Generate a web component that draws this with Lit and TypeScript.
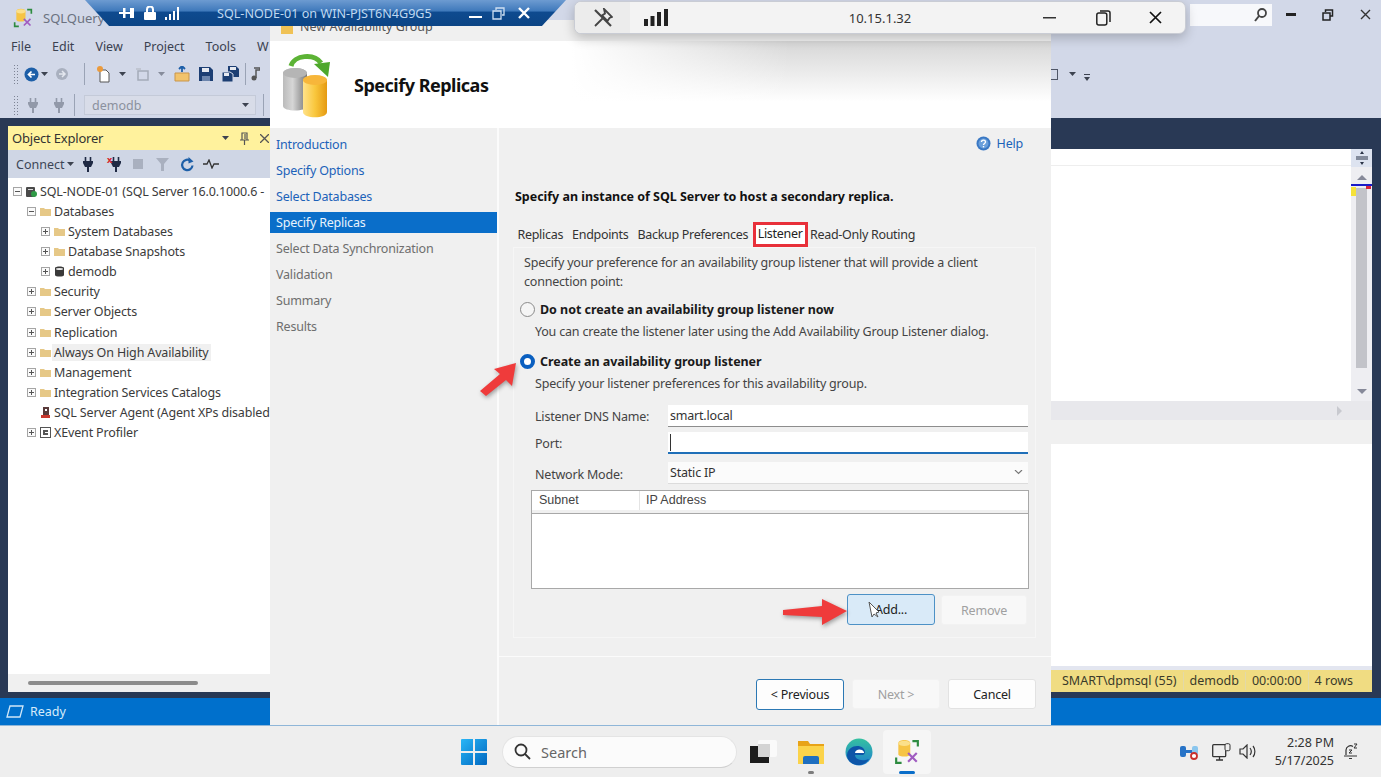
import { LitElement, html, css } from "lit";
import { customElement } from "lit/decorators.js";

type TreeRow = { label: string; level: number; icon: string; exp?: string; hover?: boolean };

const TREE: TreeRow[] = [
  { label: "SQL-NODE-01 (SQL Server 16.0.1000.6 -", level: 0, icon: "server", exp: "-" },
  { label: "Databases", level: 1, icon: "folder", exp: "-" },
  { label: "System Databases", level: 2, icon: "folder", exp: "+" },
  { label: "Database Snapshots", level: 2, icon: "folder", exp: "+" },
  { label: "demodb", level: 2, icon: "db", exp: "+" },
  { label: "Security", level: 1, icon: "folder", exp: "+" },
  { label: "Server Objects", level: 1, icon: "folder", exp: "+" },
  { label: "Replication", level: 1, icon: "folder", exp: "+" },
  { label: "Always On High Availability", level: 1, icon: "folder", exp: "+", hover: true },
  { label: "Management", level: 1, icon: "folder", exp: "+" },
  { label: "Integration Services Catalogs", level: 1, icon: "folder", exp: "+" },
  { label: "SQL Server Agent (Agent XPs disabled", level: 1, icon: "agent" },
  { label: "XEvent Profiler", level: 1, icon: "xevent", exp: "+" },
];

const NAV = [
  { label: "Introduction", kind: "link" },
  { label: "Specify Options", kind: "link" },
  { label: "Select Databases", kind: "link" },
  { label: "Specify Replicas", kind: "sel" },
  { label: "Select Data Synchronization", kind: "off" },
  { label: "Validation", kind: "off" },
  { label: "Summary", kind: "off" },
  { label: "Results", kind: "off" },
];

const TABS = ["Replicas", "Endpoints", "Backup Preferences", "Listener", "Read-Only Routing"];
const MENU = ["File", "Edit", "View", "Project", "Tools", "W"];

const plug = html`<svg width="10" height="15" viewBox="0 0 10 15"><path d="M2.500 0v4M7.500 0v4" stroke="currentColor" stroke-width="1.600"/><path d="M0 4h10v2L8 10H6v5H4v-5H2L0 6z" fill="currentColor"/></svg>`;
const dropArrow = html`<svg width="7" height="4" viewBox="0 0 7 4"><path d="M0 0h7L3.500 4z" fill="#3d4350"/></svg>`;
const ssmsIcon = (size: number) => html`<svg width=${size} height=${size} viewBox="0 0 24 24">
  <path d="M4 4c0-4 11-4 11 0v10c0 3-11 3-11 0z" fill="#f6c445"/>
  <ellipse cx="9.500" cy="4" rx="5.500" ry="2.500" fill="#fbe08b"/>
  <path d="M17 2h5v5M2 17v5h5" fill="none" stroke="#2e8b40" stroke-width="2"/>
  <path d="M13 13l8 8M21 13l-8 8" stroke="#a05cc0" stroke-width="2"/>
</svg>`;

@customElement("app-root")
export class AppRoot extends LitElement {
  static styles = css`
    :host {
      display: block;
      position: relative;
      width: 1381px;
      height: 777px;
      overflow: hidden;
      background: #eeeeee;
      font-family: "Noto Sans", "Open Sans", sans-serif;
      font-size: 12.500px;
      color: #2b2b2b;
    }
    svg {
      display: block;
      flex: none;
    }

    /* ssms window */
    .ssms {
      height: 725px;
      display: flex;
      flex-direction: column;
      background: #d2d8e8;
    }
    .title {
      height: 36px;
      display: flex;
      align-items: center;
      padding: 0 10px 0 13px;
      flex: none;
    }
    .title .app {
      margin-left: 10px;
      color: #6b7280;
      font-size: 13px;
    }
    .quick {
      margin-left: auto;
      width: 82px;
      height: 22px;
      margin-top: -7px;
      background: #f7f8fb;
      display: flex;
      align-items: center;
      justify-content: flex-end;
      padding-right: 2px;
      box-sizing: border-box;
    }
    .quick svg {
      margin-right: 2px;
    }
    .winbtns {
      display: flex;
      align-items: center;
      gap: 26px;
      margin: -7px 0 0 14px;
      color: #2b3448;
    }
    .menu {
      height: 20px;
      flex: none;
      display: flex;
      align-items: center;
      padding-left: 11px;
      color: #3a4150;
      gap: 21px;
    }
    .tool {
      flex: none;
      display: flex;
      align-items: center;
      padding-left: 13px;
      color: #1f2a44;
    }
    .tool.one {
      height: 36px;
    }
    .tool.two {
      height: 26px;
    }
    .grip {
      width: 6px;
      height: 20px;
      margin-right: 4px;
      background-image: radial-gradient(#7d8494 0.700px, transparent 0.900px);
      background-size: 3px 3px;
    }
    .sep {
      width: 1px;
      height: 22px;
      background: #9aa3b5;
    }
    .slot {
      width: 24px;
      display: flex;
      justify-content: center;
      align-items: center;
    }
    .slot.small {
      width: 12px;
    }
    .faded {
      color: #9299a9;
    }
    .combo {
      width: 172px;
      height: 20px;
      margin-left: 9px;
      box-sizing: border-box;
      border: 1px solid #c4cad8;
      background: #d8dce8;
      color: #8b919e;
      display: flex;
      align-items: center;
      justify-content: space-between;
      padding: 0 6px 0 7px;
    }
    .tool-right {
      margin-left: auto;
      display: flex;
      align-items: center;
      gap: 8px;
      padding-right: 291px;
      height: 24px;
    }

    .band {
      flex: 1;
      min-height: 0;
      display: flex;
      background: #293955;
      padding: 8px 9px 6px 8px;
      box-sizing: border-box;
    }
    .oe {
      width: 262px;
      display: flex;
      flex-direction: column;
      background: #fff;
      overflow: hidden;
    }
    .oe-title {
      height: 24px;
      flex: none;
      background: #fff29d;
      display: flex;
      align-items: center;
      padding: 0 4px;
      color: #333;
      font-size: 13px;
      letter-spacing: -0.200px;
    }
    .oe-title .btns {
      margin-left: auto;
      margin-right: -3px;
      display: flex;
      align-items: center;
      gap: 11px;
      color: #555;
    }
    .oe-tool {
      height: 28px;
      flex: none;
      background: #cfd6e5;
      display: flex;
      align-items: center;
      padding-left: 8px;
      color: #1f2a44;
    }
    .oe-tool .connect {
      width: 64px;
      color: #3c4556;
      display: flex;
      align-items: center;
      gap: 3px;
    }
    .tree {
      flex: 1;
      padding-top: 3px;
      overflow: hidden;
    }
    .row {
      height: 20.150px;
      display: flex;
      align-items: center;
      white-space: nowrap;
      color: #3b3b3b;
      letter-spacing: -0.150px;
    }
    .exp {
      width: 9px;
      height: 9px;
      flex: none;
      margin-right: 4px;
      box-sizing: border-box;
      border: 1px solid #a5a5a5;
      position: relative;
      background: #fafafa;
    }
    .exp::before {
      content: "";
      position: absolute;
      left: 1px;
      right: 1px;
      top: 3px;
      height: 1px;
      background: #555;
    }
    .exp.plus::after {
      content: "";
      position: absolute;
      top: 1px;
      bottom: 1px;
      left: 3px;
      width: 1px;
      background: #555;
    }
    .noexp {
      width: 13px;
      flex: none;
    }
    .row .label {
      margin-left: 1px;
      padding: 0 2px;
    }
    .row.hover .label {
      background: #f0f0f0;
    }
    .oe-foot {
      height: 18px;
      flex: none;
      background: #f0f0f0;
      display: flex;
      align-items: center;
      padding-left: 20px;
    }
    .oe-foot div {
      width: 170px;
      height: 4px;
      border-radius: 2px;
      background: #8c8c8c;
    }

    .doc {
      margin-left: auto;
      width: 321px;
      display: flex;
      flex-direction: column;
      padding-top: 23px;
      box-sizing: border-box;
    }
    .doc-top {
      flex: none;
      height: 252px;
      display: flex;
      background: #fff;
    }
    .doc-white {
      flex: 1;
      border-top: 16px solid #fff;
      box-shadow: inset 0 17px 0 -16px #eeeeee;
    }
    .scroller {
      width: 21px;
      background: #eeeef2;
      display: flex;
      flex-direction: column;
      align-items: center;
      position: relative;
    }
    .splitter {
      height: 18px;
      width: 100%;
      background: #dde3f0;
      display: flex;
      justify-content: center;
      align-items: center;
    }
    .thumb {
      width: 11px;
      height: 180px;
      margin-top: 21px;
      background: #c2c3c9;
    }
    .mark {
      position: absolute;
      top: 35px;
      left: 0;
      width: 100%;
      height: 2px;
      background: #1a1ac8;
    }
    .mark-yellow {
      position: absolute;
      top: 38px;
      left: 0;
      width: 5px;
      height: 9px;
      background: #f5e23a;
    }
    .mark-red {
      position: absolute;
      top: 37px;
      right: 1px;
      width: 5px;
      height: 3px;
      background: #d8233a;
    }
    .arrow-up,
    .arrow-down {
      width: 0;
      height: 0;
      border-left: 5px solid transparent;
      border-right: 5px solid transparent;
    }
    .arrow-up {
      margin-top: 8px;
      border-bottom: 5px solid #868999;
      position: absolute;
      top: 18px;
    }
    .arrow-down {
      margin-top: 21px;
      border-top: 5px solid #868999;
    }
    .hscroll {
      height: 19px;
      flex: none;
      background: #e8e8ec;
      display: flex;
      justify-content: flex-end;
      align-items: center;
      padding-right: 30px;
    }
    .hscroll div {
      border-left: 5px solid #c8c9cf;
      border-top: 5px solid transparent;
      border-bottom: 5px solid transparent;
    }
    .gap {
      height: 24px;
      flex: none;
      background: #f0f0f0;
    }
    .results {
      flex: 1;
      background: #fff;
      border-bottom: 4px solid #e3e6f0;
    }
    .status-y {
      height: 22px;
      flex: none;
      background: #f0dc82;
      display: flex;
      align-items: center;
      color: #3a3a2a;
      padding-left: 11px;
      white-space: nowrap;
    }
    .status-y span {
      padding-right: 6px;
      margin-right: 6px;
      border-right: 1px solid #e3d9a8;
      line-height: 18px;
    }
    .status-y span:last-child {
      border: none;
    }
    .statusbar {
      height: 27px;
      flex: none;
      background: #0070cc;
      color: #d6ebfa;
      display: flex;
      align-items: center;
      padding-left: 6px;
      gap: 6px;
    }

    /* dialog window */
    .dlg {
      position: absolute;
      left: 270px;
      top: 20px;
      width: 781px;
      height: 705px;
      background: #f0f0f0;
      display: flex;
      flex-direction: column;
    }
    .dlg-title {
      height: 21px;
      box-sizing: border-box;
      flex: none;
      display: flex;
      align-items: flex-end;
      gap: 6px;
      padding: 0 0 7px 10px;
      color: #555;
      font-size: 12.500px;
      line-height: 15px;
    }
    .dlg-head {
      height: 87px;
      flex: none;
      background: linear-gradient(180deg, #d6d6d6 0%, #ffffff 70%);
      display: flex;
      align-items: center;
      gap: 17px;
      padding-left: 12px;
      position: relative;
    }
    .dlg-head::before {
      content: "";
      position: absolute;
      inset: 0 auto 0 0;
      width: 520px;
      background: linear-gradient(90deg, #fff 58%, rgba(255, 255, 255, 0));
    }
    .dlg-head > * {
      position: relative;
    }
    .dlg-head h1 {
      margin: 0;
      font-size: 18px;
      font-weight: 700;
      color: #111;
      letter-spacing: -0.500px;
    }
    .dlg-body {
      flex: 1;
      min-height: 0;
      display: flex;
    }
    .nav {
      width: 227px;
      flex: none;
      padding-top: 6px;
      border-right: 2px solid #fbfbfb;
      letter-spacing: -0.200px;
    }
    .nav div {
      height: 21px;
      line-height: 21px;
      margin-bottom: 5px;
      padding-left: 6px;
      white-space: nowrap;
    }
    .nav .link {
      color: #1c62b9;
    }
    .nav .sel {
      background: #0a6ec9;
      color: #e8f3fc;
    }
    .nav .off {
      color: #6e6e6e;
    }
    .main {
      flex: 1;
      min-width: 0;
      display: flex;
      flex-direction: column;
      letter-spacing: -0.200px;
    }
    .help {
      display: flex;
      justify-content: flex-end;
      align-items: center;
      gap: 6px;
      height: 30px;
      padding-right: 28px;
      color: #1c62b9;
    }
    .lead {
      margin: 28px 0 0 16px;
      height: 21px;
      line-height: 21px;
      font-weight: 700;
      color: #111;
      white-space: nowrap;
      letter-spacing: -0.030px;
    }
    .tabs {
      display: flex;
      align-items: flex-end;
      height: 25px;
      margin: 15px 0 0 14px;
      color: #333;
      position: relative;
      letter-spacing: -0.300px;
    }
    .tab {
      padding: 0 4.500px;
      height: 22px;
      line-height: 21px;
      white-space: nowrap;
      margin-bottom: 1px;
    }
    .tab.active {
      height: 25px;
      margin: 0 -2px 0 0;
      box-sizing: border-box;
      border: 3px solid #e8303a;
      padding: 0 2px;
      line-height: 18px;
      background: #fff;
      color: #222;
    }
    .panel {
      margin: 0 15px 0 14px;
      height: 391px;
      box-sizing: border-box;
      border: 1px solid #f6f6f6;
      padding: 5px 0 0 10px;
      color: #444;
      flex: none;
    }
    .panel p {
      margin: 0;
      line-height: 19px;
      width: 490px;
    }
    .opt {
      display: flex;
      align-items: center;
      gap: 5px;
      font-weight: 700;
      color: #1a1a1a;
      margin-left: -4px;
      height: 20px;
      letter-spacing: -0.050px;
    }
    .opt.first {
      margin-top: 8px;
    }
    .opt.second {
      margin-top: 9px;
    }
    .radio {
      width: 15px;
      height: 15px;
      box-sizing: border-box;
      border-radius: 50%;
      flex: none;
      border: 1px solid #8a8a8a;
      background: #f5f5f5;
    }
    .radio.on {
      border: 4px solid #0a5fc0;
      background: #fff;
    }
    .sub {
      margin: 3px 0 0 11px;
      height: 20px;
      line-height: 20px;
      white-space: nowrap;
    }
    .form {
      display: grid;
      grid-template-columns: 133px 360px;
      row-gap: 5px;
      margin: 11px 0 0 11px;
      align-items: center;
    }
    .field {
      height: 22px;
      box-sizing: border-box;
      background: #fff;
      border-bottom: 1px solid #8d8d8d;
      line-height: 21px;
      padding-left: 2px;
      color: #333;
    }
    .field.focus {
      border-bottom: 2px solid #1f6fb8;
      position: relative;
    }
    .field.focus::before {
      content: "";
      position: absolute;
      left: 2px;
      top: 2px;
      height: 17px;
      width: 1px;
      background: #333;
    }
    .field.select {
      background: #fbfbfb;
      border-bottom: 1px solid #dcdcdc;
      display: flex;
      align-items: center;
      justify-content: space-between;
      padding-right: 5px;
      margin-top: 3px;
    }
    .form .mode {
      padding-top: 6px;
    }
    .grid {
      width: 498px;
      height: 99px;
      margin: 6px 0 0 7px;
      box-sizing: border-box;
      border: 1px solid #a8a8a8;
      background: #fff;
      font-family: "Liberation Sans", sans-serif;
      font-size: 12.500px;
      letter-spacing: 0;
      color: #444;
    }
    .grid-head {
      display: flex;
      height: 22px;
      border-bottom: 1px solid #a8a8a8;
      box-shadow: 0 -3px 0 #f0f0f0 inset;
    }
    .grid-head div {
      line-height: 18px;
      padding-left: 6px;
    }
    .grid-head div:first-child {
      width: 100px;
      border-right: 1px solid #e4e4e4;
      padding-left: 7px;
      margin-bottom: 3px;
    }
    .grid-btns {
      display: flex;
      justify-content: flex-end;
      align-items: center;
      gap: 6px;
      width: 497px;
      margin: 5px 0 0 6px;
    }
    .btn {
      width: 88px;
      height: 30px;
      box-sizing: border-box;
      text-align: center;
      line-height: 29px;
      background: #fdfdfd;
      border: 1px solid #e2e2e2;
      border-radius: 3px;
      color: #222;
      position: relative;
    }
    .btn.off {
      background: #f8f8f8;
      color: #a0a0a0;
      border-color: #f2f2f2;
    }
    .grid-btns .btn.off {
      width: 86px;
    }
    .btn.hot {
      background: #d9eaf8;
      border-color: #4d91c6;
      height: 31px;
    }
    .btn.def {
      border-color: #2b78b4;
      height: 31px;
    }
    .cursor {
      position: absolute;
      left: 20px;
      top: 6px;
    }
    .foot {
      margin-top: 18px;
      border-top: 1px solid #fbfbfb;
      flex: 1;
      display: flex;
      justify-content: flex-end;
      gap: 8px;
      padding: 22px 15px 0 0;
    }

    /* red callouts */
    .callout {
      position: absolute;
      filter: drop-shadow(1px 2px 2px rgba(0, 0, 0, 0.35));
    }

    /* remote desktop bars */
    .rdp-blue {
      position: absolute;
      left: 85px;
      top: 0;
      width: 481px;
      height: 26px;
      clip-path: polygon(0 0, 100% 0, 95% 100%, 5% 100%);
      background: linear-gradient(180deg, #6d9bd1 0%, #3f79bb 42%, #0e4a8f 47%, #0c4585 100%);
      display: flex;
      align-items: center;
      color: #bfd8f0;
      font-size: 12.600px;
    }
    .rdp-blue .ico {
      display: flex;
      align-items: center;
      gap: 9px;
      margin-left: 34px;
      color: #fff;
    }
    .rdp-blue .name {
      margin-left: 38px;
      white-space: nowrap;
    }
    .rdp-blue .ctl {
      display: flex;
      align-items: center;
      gap: 10px;
      margin-left: 37px;
      color: #fff;
    }
    .rdp-gray {
      position: absolute;
      left: 574px;
      top: 1px;
      width: 612px;
      height: 33px;
      box-sizing: border-box;
      background: #f3f3f3;
      border-radius: 7px;
      border: 1px solid #c9ccd4;
      box-shadow: 0 4px 12px rgba(0, 0, 0, 0.22);
      display: flex;
      align-items: center;
      overflow: hidden;
      color: #222;
    }
    .rdp-gray .pin {
      width: 55px;
      height: 100%;
      background: #ececec;
      display: flex;
      align-items: center;
      justify-content: center;
    }
    .rdp-gray .signal {
      margin-left: 14px;
    }
    .rdp-gray .ip {
      width: 200px;
      margin-left: 112px;
      text-align: center;
      color: #333;
      font-size: 13px;
    }
    .rdp-gray .ctl {
      display: flex;
      align-items: center;
      gap: 40px;
      margin-left: 63px;
    }

    /* taskbar */
    .taskbar {
      position: absolute;
      left: 0;
      right: 0;
      top: 725px;
      height: 52px;
      box-sizing: border-box;
      border-top: 1px solid #8fb6d8;
      background: #eeeeee;
      display: flex;
      align-items: center;
      padding-left: 461px;
      padding-right: 23px;
    }
    .search {
      width: 235px;
      height: 32px;
      margin-left: 15px;
      box-sizing: border-box;
      border-radius: 16px;
      background: #fbfbfb;
      border: 1px solid #e4e4e4;
      border-bottom-color: #d0d0d0;
      display: flex;
      align-items: center;
      gap: 10px;
      padding-left: 11px;
      color: #666;
      font-size: 14.500px;
    }
    .apps {
      display: flex;
      margin-left: 2px;
    }
    .app-slot {
      width: 48px;
      height: 44px;
      display: flex;
      justify-content: center;
      align-items: center;
      position: relative;
    }
    .app-slot.run {
      background: #f6f6f6;
      border-radius: 4px;
    }
    .app-slot .dot {
      position: absolute;
      bottom: 0;
      width: 6px;
      height: 3px;
      border-radius: 2px;
      background: #7d7d7d;
    }
    .app-slot .bar {
      position: absolute;
      bottom: 0;
      width: 16px;
      height: 3px;
      border-radius: 2px;
      background: #0a6ec9;
    }
    .tray {
      margin-left: auto;
      display: flex;
      align-items: center;
      gap: 9px;
      color: #333;
    }
    .tray .net {
      margin: 0 -2px 0 3px;
    }
    .clock {
      text-align: right;
      line-height: 18px;
      color: #333;
      margin-left: 8px;
    }
  `;

  private treeIcon(kind: string) {
    if (kind === "folder") {
      return html`<svg width="11" height="9" viewBox="0 0 11 9"><path d="M0 1h4l1 1h6v7H0z" fill="#e6c887"/></svg>`;
    }
    if (kind === "db") {
      return html`<svg width="11" height="11" viewBox="0 0 11 11"><path d="M1 2c0-2 9-2 9 0v7c0 2-9 2-9 0z" fill="#3a3a3a"/><ellipse cx="5.500" cy="3" rx="3.500" ry="1" fill="#e8e8e8"/></svg>`;
    }
    if (kind === "server") {
      return html`<svg width="11" height="11" viewBox="0 0 11 11"><rect x="0" y="1" width="9" height="10" rx="1" fill="#4a4a4a"/><rect x="2" y="3" width="5" height="1" fill="#ddd"/><circle cx="8" cy="8" r="3" fill="#2f9a46"/></svg>`;
    }
    if (kind === "agent") {
      return html`<svg width="11" height="13" viewBox="0 0 11 13"><path d="M3 1h6v8H3z" fill="#5a3a3a"/><path d="M5 3h2v2H5z" fill="#fff"/><path d="M1 9h9v3H1z" fill="#c9382e"/></svg>`;
    }
    return html`<svg width="11" height="11" viewBox="0 0 11 11"><rect x=".5" y=".5" width="10" height="10" fill="#fff" stroke="#555"/><path d="M3 3h5v2H5v1h3v2H3z" fill="#555"/></svg>`;
  }

  private renderTree() {
    return TREE.map((r) => {
      const pad = r.level === 0 ? 5 : r.level === 1 ? 19 : 33;
      return html`<div class="row ${r.hover ? "hover" : ""}" style="padding-left:${pad}px">
        ${r.exp
          ? html`<span class="exp ${r.exp === "+" ? "plus" : ""}"></span>`
          : html`<span class="noexp"></span>`}
        ${this.treeIcon(r.icon)}
        <span class="label">${r.label}</span>
      </div>`;
    });
  }

  private renderSsms() {
    return html`<div class="ssms">
      <div class="title">
        ${ssmsIcon(20)}
        <span class="app">SQLQuery</span>
        <div class="quick">
          <svg width="16" height="16" viewBox="0 0 16 16"><circle cx="10" cy="6" r="4" fill="none" stroke="#444" stroke-width="1.800"/><path d="M7 9l-4 5" stroke="#444" stroke-width="2"/></svg>
        </div>
        <div class="winbtns">
          <svg width="10" height="3" viewBox="0 0 10 3"><rect width="10" height="3" fill="#222"/></svg>
          <svg width="12" height="12" viewBox="0 0 12 12"><path d="M3.500 3V1h7v6H8M1 4h7v7H1z" fill="none" stroke="#222" stroke-width="1.500"/></svg>
          <svg width="11" height="11" viewBox="0 0 11 11"><path d="M1 1l9 9M10 1l-9 9" stroke="#333" stroke-width="1.400"/></svg>
        </div>
      </div>
      <div class="menu">${MENU.map((m) => html`<span>${m}</span>`)}</div>
      <div class="tool one">
        <div class="grip"></div>
        <div class="slot" style="width:14px;margin-left:1px">
          <svg width="15" height="15" viewBox="0 0 15 15"><circle cx="7.500" cy="7.500" r="7" fill="#1d5fa8"/><path d="M11 7.500H5M7.500 4.500l-3 3 3 3" fill="none" stroke="#fff" stroke-width="1.700"/></svg>
        </div>
        <div class="slot small">${dropArrow}</div>
        <div class="slot">
          <svg width="14" height="14" viewBox="0 0 14 14"><circle cx="7" cy="7" r="6" fill="#a9b0bf"/><path d="M4 7h6M7 4l3 3-3 3" fill="none" stroke="#e4e7ef" stroke-width="1.500"/></svg>
        </div>
        <div class="sep" style="margin:0 7px 0 10px"></div>
        <div class="slot">
          <svg width="18" height="18" viewBox="0 0 18 18"><path d="M5 5h6l3 3v9H5z" fill="#fff" stroke="#555"/><circle cx="5" cy="4" r="3" fill="#eb9a3c"/></svg>
        </div>
        <div class="slot small">${dropArrow}</div>
        <div class="slot" style="margin-left:3px">
          <svg width="16" height="16" viewBox="0 0 16 16"><path d="M3 5h10v9H3z" fill="none" stroke="#a4aab8" stroke-width="1.500"/><path d="M1 2h5v2H1z" fill="#c0c5d1"/></svg>
        </div>
        <div class="slot small" style="opacity:.5">${dropArrow}</div>
        <div class="slot" style="margin-left:3px">
          <svg width="17" height="16" viewBox="0 0 17 16"><path d="M1 7h14v8H1z" fill="#f2c36b" stroke="#c9954a"/><path d="M8 6V1M5 3l3-3 3 3" fill="none" stroke="#1d5fa8" stroke-width="1.800"/></svg>
        </div>
        <div class="slot">
          <svg width="14" height="14" viewBox="0 0 14 14"><path d="M0 0h11l3 3v11H0z" fill="#1c3e73"/><rect x="3" y="1" width="7" height="4" fill="#e6e9f0"/><rect x="3" y="9" width="8" height="5" fill="#6c85ad"/></svg>
        </div>
        <div class="slot">
          <svg width="17" height="16" viewBox="0 0 17 16"><path d="M6 0h8l3 3v8H6z" fill="#1c3e73"/><rect x="8" y="1" width="6" height="3" fill="#e6e9f0"/><path d="M0 6h8l3 2v8H0z" fill="#1c3e73" stroke="#d2d8e8"/><rect x="2" y="7" width="5" height="3" fill="#e6e9f0"/></svg>
        </div>
        <div class="sep" style="margin:0 3px"></div>
        <div class="slot small"><svg width="9" height="14" viewBox="0 0 9 14"><path d="M3 1h6v2H5v8" fill="none" stroke="#555" stroke-width="1.500"/><circle cx="3" cy="11" r="2.500" fill="#555"/></svg></div>
        <div class="tool-right">
          <svg width="11" height="11" viewBox="0 0 11 11" style="margin-right:3px"><rect x=".5" y=".5" width="10" height="10" fill="none" stroke="#4f5667"/></svg>
          ${dropArrow}
          <svg width="6" height="7" viewBox="0 0 6 7" style="margin-top:6px"><path d="M0 0h6v1H0zM0 3h6L3 7z" fill="#3d4350"/></svg>
        </div>
      </div>
      <div class="tool two">
        <div class="grip"></div>
        <div class="slot faded" style="margin-left:-2px">${plug}</div>
        <div class="slot faded" style="margin-left:2px">${plug}</div>
        <div class="sep" style="margin-left:3px"></div>
        <div class="combo">demodb ${dropArrow}</div>
        <div class="sep" style="margin-left:7px"></div>
      </div>
      <div class="band">
        <div class="oe">
          <div class="oe-title">
            Object Explorer
            <div class="btns">
              ${dropArrow}
              <svg width="9" height="13" viewBox="0 0 9 13"><path d="M2 1h5v7H2zM0 8h9M4.500 8v5M5 2v5" fill="none" stroke="#555" stroke-width="1.200"/></svg>
              <svg width="9" height="9" viewBox="0 0 9 9"><path d="M0 0l9 9M9 0L0 9" stroke="#555" stroke-width="1.300"/></svg>
            </div>
          </div>
          <div class="oe-tool">
            <div class="connect">Connect ${dropArrow}</div>
            <div class="slot" style="width:16px">${plug}</div>
            <div class="slot" style="width:40px;position:relative">${plug}<span style="position:absolute;left:11px;top:-4px;color:#d8232a;font-size:9px;font-weight:700">x</span></div>
            <div class="slot" style="width:24px;margin-left:-10px"><svg width="10" height="10" viewBox="0 0 10 10"><rect width="10" height="10" fill="#a9b0bf"/></svg></div>
            <div class="slot" style="width:24px"><svg width="13" height="13" viewBox="0 0 13 13"><path d="M0 0h13L8 6v7H5V6z" fill="#a9b0bf"/></svg></div>
            <div class="slot" style="width:26px"><svg width="15" height="15" viewBox="0 0 15 15"><path d="M12.500 8.500a5.200 5.200 0 1 1-2-4.700" fill="none" stroke="#1d5fa8" stroke-width="2.200"/><path d="M8.500 0v6.500l5-2z" fill="#1d5fa8"/></svg></div>
            <div class="slot" style="width:22px"><svg width="16" height="10" viewBox="0 0 16 10"><path d="M0 5h4l2-4 3 8 2-4h5" fill="none" stroke="#333" stroke-width="1.300"/></svg></div>
          </div>
          <div class="tree">${this.renderTree()}</div>
          <div class="oe-foot"><div></div></div>
        </div>
        <div class="doc">
          <div class="doc-top">
            <div class="doc-white"></div>
            <div class="scroller">
              <div class="splitter">
                <svg width="12" height="14" viewBox="0 0 12 14"><path d="M0 6h12M0 8h12" stroke="#2b3448" stroke-width="1.200"/><path d="M6 0l2 3H4zM6 14l-2-3h4z" fill="#2b3448"/></svg>
              </div>
              <div class="arrow-up"></div>
              <div class="thumb"></div>
              <div class="arrow-down"></div>
              <div class="mark"></div>
              <div class="mark-yellow"></div>
              <div class="mark-red"></div>
            </div>
          </div>
          <div class="hscroll"><div></div></div>
          <div class="gap"></div>
          <div class="results"></div>
          <div class="status-y">
            <span>SMART\\dpmsql (55)</span><span>demodb</span><span>00:00:00</span><span>4 rows</span>
          </div>
        </div>
      </div>
      <div class="statusbar">
        <svg width="18" height="13" viewBox="0 0 18 13"><path d="M4 1h13l-3 11H1z" fill="none" stroke="#cfe6f8" stroke-width="1.300"/></svg>
        Ready
      </div>
    </div>`;
  }

  private renderDialog() {
    return html`<div class="dlg">
      <div class="dlg-title">
        <svg width="14" height="12" viewBox="0 0 14 12"><path d="M1 2h12v10H1z" fill="#f0c255"/></svg>
        New Availability Group
      </div>
      <div class="dlg-head">
        <svg width="55" height="66" viewBox="0 0 55 66">
          <defs>
            <linearGradient id="g1" x1="0" x2="1"><stop offset="0" stop-color="#bbb"/><stop offset=".4" stop-color="#d6d6d6"/><stop offset="1" stop-color="#777"/></linearGradient>
            <linearGradient id="g2" x1="0" x2="1"><stop offset="0" stop-color="#ffe28a"/><stop offset=".5" stop-color="#f9c73d"/><stop offset="1" stop-color="#e59a12"/></linearGradient>
          </defs>
          <path d="M1 22c0-8 24-8 24 0v32c0 6-24 6-24 0z" fill="url(#g1)"/>
          <ellipse cx="13" cy="21" rx="12" ry="5" fill="#b5b5b5"/>
          <path d="M21 29c0-7 24-7 24 0v31c0 7-24 7-24 0z" fill="url(#g2)"/>
          <ellipse cx="33" cy="28" rx="12" ry="5" fill="#f7b63a"/>
          <path d="M9 14C12 3 32 1 39 11" fill="none" stroke="#5cb335" stroke-width="5"/>
          <path d="M32 12l16-2-2 15z" fill="#4ea82b"/>
        </svg>
        <h1>Specify Replicas</h1>
      </div>
      <div class="dlg-body">
        <div class="nav">
          ${NAV.map((n) => html`<div class=${n.kind}>${n.label}</div>`)}
        </div>
        <div class="main">
          <div class="help">
            <svg width="15" height="15" viewBox="0 0 15 15"><circle cx="7.500" cy="7.500" r="7" fill="#3a78c4"/><circle cx="7.500" cy="7.500" r="5" fill="#6a9fdb"/><path d="M5.500 6c0-2.500 4-2.500 4 0 0 1.500-2 1.500-2 3" fill="none" stroke="#fff" stroke-width="1.400"/><rect x="6.800" y="10" width="1.400" height="1.400" fill="#fff"/></svg>
            Help
          </div>
          <div class="lead">Specify an instance of SQL Server to host a secondary replica.</div>
          <div class="tabs">
            ${TABS.map(
              (t) => html`<div class="tab ${t === "Listener" ? "active" : ""}">${t}</div>`
            )}
          </div>
          <div class="panel">
            <p>Specify your preference for an availability group listener that will provide a client connection point:</p>
            <div class="opt first"><span class="radio"></span>Do not create an availability group listener now</div>
            <div class="sub">You can create the listener later using the Add Availability Group Listener dialog.</div>
            <div class="opt second"><span class="radio on"></span>Create an availability group listener</div>
            <div class="sub">Specify your listener preferences for this availability group.</div>
            <div class="form">
              <span>Listener DNS Name:</span>
              <div class="field">smart.local</div>
              <span>Port:</span>
              <div class="field focus"></div>
              <span class="mode">Network Mode:</span>
              <div class="field select">
                Static IP
                <svg width="9" height="5" viewBox="0 0 9 5"><path d="M1 0l3.500 3.500L8 0" fill="none" stroke="#777" stroke-width="1.200"/></svg>
              </div>
            </div>
            <div class="grid">
              <div class="grid-head">
                <div>Subnet</div>
                <div>IP Address</div>
              </div>
            </div>
            <div class="grid-btns">
              <div class="btn hot">
                Add...
                <svg class="cursor" width="14" height="18" viewBox="0 0 14 18"><path d="M1 1l10 10-3 1 2 4-4-3-2 3z" fill="#fff" stroke="#555"/></svg>
              </div>
              <div class="btn off">Remove</div>
            </div>
          </div>
          <div class="foot">
            <div class="btn def">&lt; Previous</div>
            <div class="btn off">Next &gt;</div>
            <div class="btn">Cancel</div>
          </div>
        </div>
      </div>
    </div>`;
  }

  private renderRdp() {
    return html`
      <div class="rdp-blue">
        <div class="ico">
          <svg width="16" height="12" viewBox="0 0 16 12"><path d="M0 6h4" stroke="#fff" stroke-width="2"/><path d="M4 1h2.500v10H4zM6 5h5v2H6zM11 1h4v10h-4z" fill="#fff"/></svg>
          <svg width="12" height="14" viewBox="0 0 12 14"><path d="M3 6V3.500a3 3 0 0 1 6 0V6" fill="none" stroke="#fff" stroke-width="2"/><rect y="6" width="12" height="8" rx="1" fill="#fff"/></svg>
          <svg width="14" height="13" viewBox="0 0 14 13"><path d="M0 10h2v3H0zM4 7h2v6H4zM8 4h2v9H8zM12 0h2v13h-2z" fill="#fff"/></svg>
        </div>
        <span class="name">SQL-NODE-01 on WIN-PJST6N4G9G5</span>
        <div class="ctl">
          <svg width="13" height="12" viewBox="0 0 13 12"><rect y="9" width="13" height="2" fill="#fff"/></svg>
          <svg width="13" height="13" viewBox="0 0 13 13"><path d="M4 3V1h8v7h-2M1 4h8v8H1z" fill="none" stroke="#cfe0f2" stroke-width="1.300"/></svg>
          <svg width="12" height="12" viewBox="0 0 12 12" style="margin-left:3px"><path d="M1 1l10 10M11 1L1 11" stroke="#fff" stroke-width="2.400"/></svg>
        </div>
      </div>
      <div class="rdp-gray">
        <div class="pin">
          <svg width="20" height="20" viewBox="0 0 20 20"><path d="M2 2l16 16" stroke="#444" stroke-width="2.200"/><path d="M11 1l8 8-2.500 1-2 3-5.500-5.500 3-2zM9.500 10.500L2 18" fill="none" stroke="#444" stroke-width="1.800"/></svg>
        </div>
        <div class="signal">
          <svg width="24" height="17" viewBox="0 0 24 17"><path d="M0 10h4v7H0zM6.500 7h4v10h-4zM13 3h4v14h-4zM20 0h4v17h-4z" fill="#222"/></svg>
        </div>
        <div class="ip">10.15.1.32</div>
        <div class="ctl">
          <svg width="13" height="2" viewBox="0 0 13 2"><rect width="13" height="1.500" fill="#333"/></svg>
          <svg width="15" height="16" viewBox="0 0 15 16"><rect x=".8" y="3" width="10" height="12" rx="2" fill="none" stroke="#222" stroke-width="1.500"/><path d="M4 1h8a2 2 0 0 1 2 2v9" fill="none" stroke="#222" stroke-width="1.500"/></svg>
          <svg width="13" height="13" viewBox="0 0 13 13" style="margin-left:-2px"><path d="M1 1l11 11M12 1L1 12" stroke="#111" stroke-width="1.700"/></svg>
        </div>
      </div>
    `;
  }

  private renderTaskbar() {
    return html`<div class="taskbar">
      <div class="app-slot" style="width:26px">
        <svg width="26" height="26" viewBox="0 0 26 26"><defs><linearGradient id="w" x1="0" y1="0" x2="1" y2="1"><stop offset="0" stop-color="#29b6f6"/><stop offset="1" stop-color="#0067c0"/></linearGradient></defs><path d="M0 1a1 1 0 0 1 1-1h11v12H0zM14 0h11a1 1 0 0 1 1 1v11H14zM0 14h12v12H1a1 1 0 0 1-1-1zM14 14h12v11a1 1 0 0 1-1 1H14z" fill="url(#w)"/></svg>
      </div>
      <div class="search">
        <svg width="17" height="17" viewBox="0 0 17 17"><circle cx="7" cy="7" r="5.500" fill="none" stroke="#333" stroke-width="1.800"/><path d="M11 11l5 5" stroke="#333" stroke-width="1.800"/></svg>
        Search
      </div>
      <div class="apps">
        <div class="app-slot">
          <svg width="28" height="26" viewBox="0 0 28 26"><rect x="9" y="1" width="19" height="17" rx="2" fill="#fafafa"/><rect x="9" y="5" width="12" height="13" fill="#d4d4d4"/><path d="M1 7h8v11h11v6H1z" fill="#1c1c1c"/></svg>
        </div>
        <div class="app-slot">
          <svg width="28" height="26" viewBox="0 0 28 26"><path d="M1 2h10l2 3h14v5H1z" fill="#e8a318"/><path d="M1 7h26v18H1z" fill="#fbd34a"/><path d="M8 17h12a2 2 0 0 1 2 2v6H6v-6a2 2 0 0 1 2-2z" fill="#1f6fc0"/></svg>
          <span class="dot"></span>
        </div>
        <div class="app-slot">
          <svg width="28" height="28" viewBox="0 0 28 28"><defs><linearGradient id="e1" x1="0" y1="0" x2="0" y2="1"><stop offset="0" stop-color="#35c1a0"/><stop offset="1" stop-color="#1e7fd0"/></linearGradient></defs><circle cx="14" cy="14" r="13.500" fill="url(#e1)"/><path d="M2 17C3 8 13 6 18 10c3 3 2 6 0 7H10c0 4 6 7 14 4-3 5-8 6.500-12 6C6 26 2 22 2 17z" fill="#0d55a8"/><path d="M10 15c0-4 7-5 9-1v1z" fill="#fff"/></svg>
        </div>
        <div class="app-slot run">
          ${ssmsIcon(26)}
          <span class="bar"></span>
        </div>
      </div>
      <div class="tray">
        <svg width="20" height="16" viewBox="0 0 20 16"><rect x="0" y="2" width="6" height="11" rx="2" fill="#2773c7"/><rect x="6" y="6" width="7" height="3" fill="#2773c7"/><rect x="12" y="2" width="6" height="9" rx="2" fill="#8ac6ee"/><circle cx="14" cy="12" r="3" fill="#fff" stroke="#c9302c" stroke-width="1.800"/></svg>
        <svg class="net" width="20" height="18" viewBox="0 0 20 18"><rect x=".7" y="1.700" width="13" height="12" rx="1" fill="none" stroke="#333" stroke-width="1.300"/><path d="M4 17h7M7.500 14v3" stroke="#333" stroke-width="1.300"/><rect x="13" y=".7" width="5" height="7" rx="1.500" fill="#eee" stroke="#333"/></svg>
        <svg width="19" height="15" viewBox="0 0 19 15"><path d="M1 5h3l4-4v13l-4-4H1z" fill="none" stroke="#333" stroke-width="1.200"/><path d="M11 4c1.500 2 1.500 5 0 7M14 2c2.500 3 2.500 8 0 11" fill="none" stroke="#333" stroke-width="1.200"/></svg>
        <div class="clock">2:28 PM<br />5/17/2025</div>
        <svg width="15" height="17" viewBox="0 0 15 17"><path d="M3 12V7a4.500 4.500 0 0 1 7-3.500M1 13h13M6 15.500h3" fill="none" stroke="#333" stroke-width="1.200"/><path d="M11 1h3l-3 4h3M6 7h3L6 10h3" fill="none" stroke="#333"/></svg>
      </div>
    </div>`;
  }

  render() {
    return html`
      ${this.renderSsms()} ${this.renderDialog()}
      <svg class="callout" style="left:478px;top:362px" width="42" height="36" viewBox="0 0 42 36"><path d="M38 1L34 24 28 18 8 34 2 29 22 12 16 7z" fill="#ef3b3b"/></svg>
      <svg class="callout" style="left:780px;top:598px" width="68" height="28" viewBox="0 0 68 28"><path d="M67 13L42 1v7L3 12v5l39 2v8z" fill="#ef3b3b"/></svg>
      ${this.renderRdp()} ${this.renderTaskbar()}
    `;
  }
}

declare global {
  interface HTMLElementTagNameMap {
    "app-root": AppRoot;
  }
}
